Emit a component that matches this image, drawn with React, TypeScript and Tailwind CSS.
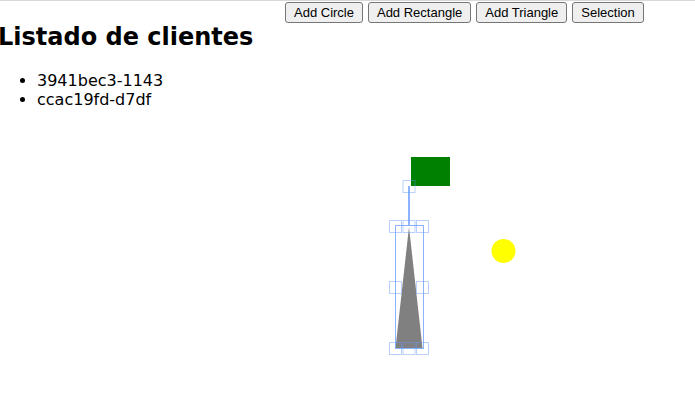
const clients = ["3941bec3-1143", "ccac19fd-d7df"];
const actions = ["Add Circle", "Add Rectangle", "Add Triangle", "Selection"];

// Top-left corners of the resize handles, followed by the rotation handle.
const handles = [
  [389.5, 220.5], [403, 220.5], [416.5, 220.5],
  [389.5, 281.5], [416.5, 281.5],
  [389.5, 342.5], [403, 342.5], [416.5, 342.5],
  [403, 180.5],
];

function Drawing() {
  return (
    <svg className="block" width="400" height="380" viewBox="285 25 400 380" role="img" aria-label="Shapes">
      <rect x="411" y="157" width="39" height="29" fill="#008000" />
      <circle cx="503.5" cy="251" r="12" fill="#ffff00" />
      <path d="M409 227 L422.5 348 H395.5 Z" fill="#808080" />
      <g fill="none" stroke="#6699ff">
        <rect x="395.5" y="225.5" width="28" height="123" strokeOpacity="0.75" />
        <path d="M409 186 V225" strokeWidth="2" strokeOpacity="0.75" />
        {handles.map(([x, y]) => (
          <rect key={`${x}-${y}`} x={x} y={y} width="12" height="12" strokeOpacity="0.45" />
        ))}
      </g>
    </svg>
  );
}

export default function App() {
  return (
    <main className="flex overflow-hidden border-t border-[#d8d8d8] bg-white text-black">
      <section className="w-[285px] shrink-0 whitespace-nowrap font-['DejaVu_Sans',sans-serif]">
        <h2 className="-ml-0.5 mt-[21px] text-2xl leading-[30px] font-bold">Listado de clientes</h2>
        <ul className="mt-[19px] list-disc pl-[37px] text-base leading-[19px]">
          {clients.map((id) => <li key={id}>{id}</li>)}
        </ul>
      </section>
      <section className="min-w-0 flex-1">
        <div className="flex gap-[5px] pt-px pb-0.5">
          {actions.map((label) => (
            <button
              key={label}
              type="button"
              className="h-[21px] shrink-0 rounded-[3px] border border-[#767676] bg-[#efefef] px-2 font-['Liberation_Sans',Arial,sans-serif] text-[13px] leading-[15px]"
            >
              {label}
            </button>
          ))}
        </div>
        <Drawing />
      </section>
    </main>
  );
}
